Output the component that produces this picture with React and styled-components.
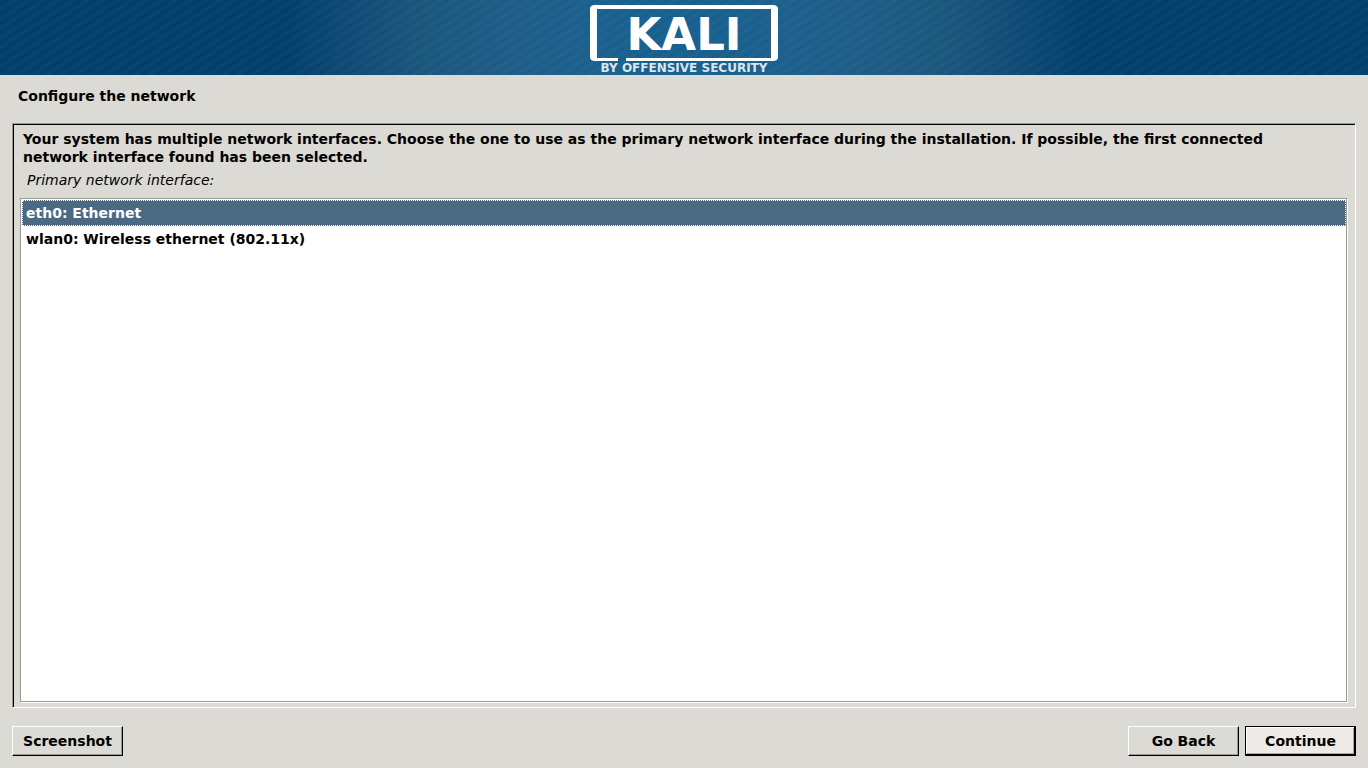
import React, { useState } from "react";
import styled, { createGlobalStyle } from "styled-components";

const GlobalStyle = createGlobalStyle`
  *, *::before, *::after { box-sizing: border-box; }
  body {
    margin: 0;
    background: #dcdad5;
    color: #000;
    font: bold 14px/18px "DejaVu Sans", Verdana, sans-serif;
  }
`;

const Page = styled.div`
  display: flex;
  flex-direction: column;
  min-height: 100vh;
`;

const Banner = styled.header`
  display: flex;
  justify-content: center;
  height: 75px;
  background:
    repeating-linear-gradient(147deg, rgba(255, 255, 255, 0.03) 0, rgba(255, 255, 255, 0) 4px, rgba(255, 255, 255, 0.03) 8px),
    radial-gradient(ellipse 400px 300px at 50% 50%, #155f8f 0%, #1b5f8d 25%, #1d5c87 45%, #1a567c 65%, #114c77 80%, #003f6b 100%);
  background-color: #003f6b;
`;

const Logo = styled.svg`
  width: 190px;
  height: 75px;
  fill: #fff;
  font-family: "DejaVu Sans", Verdana, sans-serif;
  font-weight: bold;
`;

const Title = styled.h1`
  margin: 0;
  padding: 12px 18px 18px;
  font-size: 14px;
  line-height: 18px;
`;

const Panel = styled.main`
  flex: 1;
  display: flex;
  flex-direction: column;
  margin: 0 12px;
  padding: 6px 8px 5px 7px;
  border: 1px solid;
  border-color: #9c9a93 #fff #fff #9c9a93;
  box-shadow: inset 1px 1px #000;
`;

const Description = styled.p`
  margin: 0;
  padding: 0 24px 0 3px;
`;

const GroupLabel = styled.div`
  padding: 5px 7px 9px;
  font-weight: normal;
  font-style: italic;
`;

const List = styled.div`
  flex: 1;
  padding: 1px 0 0 1px;
  background: #fff;
  border: 1px solid #9c9a93;
  box-shadow: 1px 1px #fff;
`;

const Option = styled.label`
  display: block;
  padding: 3px;
  border: 1px dotted ${(p) => (p.$selected ? "#fff" : "transparent")};
  background: ${(p) => (p.$selected ? "#4b6983" : "#fff")};
  color: ${(p) => (p.$selected ? "#fff" : "#000")};
`;

const HiddenRadio = styled.input`
  appearance: none;
  position: absolute;
  margin: 0;
  outline: none;
`;

const Actions = styled.footer`
  display: flex;
  gap: 6px;
  padding: 18px 12px 12px;
`;

const Button = styled.button`
  width: 111px;
  height: 30px;
  padding: 0;
  border: 1px solid;
  border-color: #fff #000 #000 #fff;
  background: #dcdad5;
  box-shadow: inset -1px -1px #9c9a93;
  color: #000;
  font: inherit;
  ${(p) => p.$pushRight && "margin-left: auto;"}
  ${(p) =>
    p.$primary &&
    `
    border-color: #000;
    background: #eeebe7;
    box-shadow: inset -1px -1px #000, inset 1px 1px #fff, inset -2px -2px #aca598;
  `}
`;

const interfaces = [
  { id: "eth0", label: "eth0: Ethernet" },
  { id: "wlan0", label: "wlan0: Wireless ethernet (802.11x)" },
];

function KaliLogo() {
  return (
    <Logo viewBox="0 0 190 75" role="img" aria-label="Kali by Offensive Security">
      <path
        fillRule="evenodd"
        d="M6 5H184Q189 5 189 9V57Q189 61 184 61H37V58H182V9H8V58H29V61H6Q1 61 1 57V9Q1 5 6 5Z"
      />
      <text x="95" y="50" textAnchor="middle" fontSize="45">KALI</text>
      <text x="95" y="72" textAnchor="middle" fontSize="12" fillOpacity="0.85">BY OFFENSIVE SECURITY</text>
    </Logo>
  );
}

export default function App() {
  const [selected, setSelected] = useState("eth0");
  return (
    <Page>
      <GlobalStyle />
      <Banner>
        <KaliLogo />
      </Banner>
      <Title>Configure the network</Title>
      <Panel>
        <Description>
          Your system has multiple network interfaces. Choose the one to use as the primary network
          interface during the installation. If possible, the first connected network interface found
          has been selected.
        </Description>
        <GroupLabel id="interface-label">Primary network interface:</GroupLabel>
        <List role="radiogroup" aria-labelledby="interface-label">
          {interfaces.map(({ id, label }) => (
            <Option key={id} $selected={selected === id}>
              <HiddenRadio
                type="radio"
                name="interface"
                value={id}
                checked={selected === id}
                onChange={() => setSelected(id)}
              />
              {label}
            </Option>
          ))}
        </List>
      </Panel>
      <Actions>
        <Button type="button">Screenshot</Button>
        <Button type="button" $pushRight>Go Back</Button>
        <Button type="button" $primary>Continue</Button>
      </Actions>
    </Page>
  );
}
